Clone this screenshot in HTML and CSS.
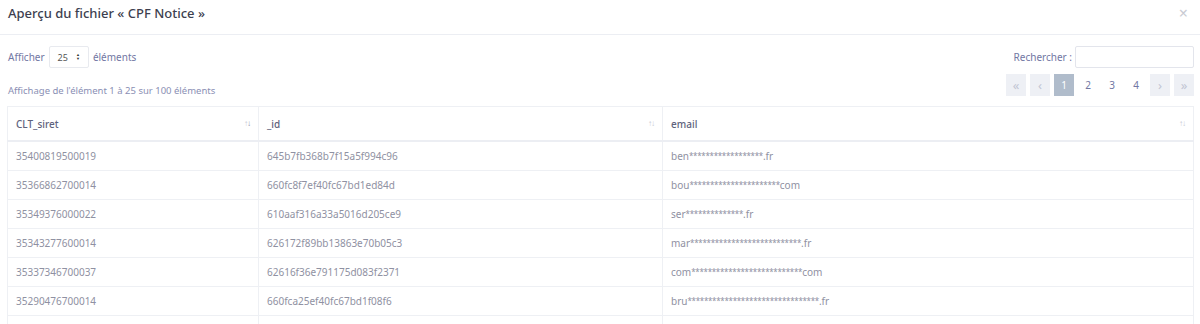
FILE: index.html
```html
<!DOCTYPE html>
<html lang="fr">
<head>
    <meta charset="UTF-8">
    <title>Aperçu du fichier</title>
    <link rel="stylesheet" href="styles.css">
</head>
<body>
<div class="modal">
    <div class="modal-header">
        <h5 class="modal-title">Aperçu du fichier « CPF Notice »</h5>
        <span class="close">&times;</span>
    </div>
    <div class="modal-body">
        <div class="controls">
            <div class="left">
                <label class="length">Afficher
                    <span class="select">25 <span class="caret">&#9650;<br>&#9660;</span></span>
                    éléments</label>
                <div class="info">Affichage de l'élément 1 à 25 sur 100 éléments</div>
            </div>
            <div class="right">
                <label class="search">Rechercher : <span class="input"></span></label>
                <div class="pagination">
                    <span class="page nav">&laquo;</span>
                    <span class="page nav">&lsaquo;</span>
                    <span class="page active">1</span>
                    <span class="page">2</span>
                    <span class="page">3</span>
                    <span class="page">4</span>
                    <span class="page nav">&rsaquo;</span>
                    <span class="page nav">&raquo;</span>
                </div>
            </div>
        </div>

        <table class="data">
            <thead>
                <tr>
                    <th class="c1">CLT_siret <span class="sort">&uarr;<b>&darr;</b></span></th>
                    <th class="c2">_id <span class="sort">&uarr;&darr;</span></th>
                    <th>email <span class="sort">&uarr;&darr;</span></th>
                </tr>
            </thead>
            <tbody>
                <tr><td>35400819500019</td><td>645b7fb368b7f15a5f994c96</td><td>ben<span class="mask">******************</span>.fr</td></tr>
                <tr><td>35366862700014</td><td>660fc8f7ef40fc67bd1ed84d</td><td>bou<span class="mask">**********************</span>com</td></tr>
                <tr><td>35349376000022</td><td>610aaf316a33a5016d205ce9</td><td>ser<span class="mask">**************</span>.fr</td></tr>
                <tr><td>35343277600014</td><td>626172f89bb13863e70b05c3</td><td>mar<span class="mask">***************************</span>.fr</td></tr>
                <tr><td>35337346700037</td><td>62616f36e791175d083f2371</td><td>com<span class="mask">***************************</span>com</td></tr>
                <tr><td>35290476700014</td><td>660fca25ef40fc67bd1f08f6</td><td>bru<span class="mask">********************************</span>.fr</td></tr>
                <tr><td></td><td></td><td></td></tr>
            </tbody>
        </table>
    </div>
</div>
</body>
</html>
```

FILE: styles.css
```css
body {
    margin: 0;
    background: #fff;
    font-family: 'Noto Sans', sans-serif;
    font-size: 10px;
    color: #8f91a2;
    overflow: hidden;
}

.modal-header {
    display: flex;
    justify-content: space-between;
    align-items: flex-start;
    height: 35px;
    padding: 4px 8px 0 8px;
    border-bottom: 1px solid #eceef3;
    box-sizing: border-box;
}

.modal-title {
    margin: 0;
    font-size: 13px;
    font-weight: 500;
    color: #3d3f4f;
}

.close {
    font-size: 16px;
    line-height: 18px;
    color: #c9cbd3;
    margin-right: 4px;
}

.modal-body {
    padding: 11px 6px 0 7px;
}

.controls {
    display: flex;
    justify-content: space-between;
}

.length {
    display: flex;
    align-items: center;
    gap: 4px;
    color: #7277a3;
    height: 22px;
    padding-left: 1px;
}

.select {
    display: inline-flex;
    align-items: center;
    gap: 8px;
    border: 1px solid #e8eaef;
    border-radius: 2px;
    height: 20px;
    padding: 0 8px;
    font-size: 9px;
    color: #555;
}

.caret {
    font-size: 4px;
    line-height: 4px;
    color: #333;
}

.info {
    margin-top: 16px;
    padding-left: 1px;
    color: #8a8fb4;
    font-size: 9.5px;
}

.right {
    display: flex;
    flex-direction: column;
    align-items: flex-end;
}

.search {
    display: flex;
    align-items: center;
    gap: 3px;
    color: #7277a3;
}

.input {
    display: inline-block;
    width: 117px;
    height: 20px;
    border: 1px solid #e3e5ec;
    border-radius: 2px;
}

.pagination {
    display: flex;
    gap: 4px;
    margin-top: 6px;
}

.page {
    display: flex;
    align-items: center;
    justify-content: center;
    width: 20px;
    height: 22px;
    color: #7277a3;
    font-size: 10px;
}

.page.nav {
    background: #eef0f5;
    color: #c1c5d3;
    font-size: 13px;
}

.page.active {
    background: #b0bccb;
    color: #fff;
}

.data {
    width: 100%;
    margin-top: 9px;
    border-collapse: collapse;
    border: 1px solid #eef0f4;
}

.data th {
    text-align: left;
    font-weight: 500;
    color: #5e627c;
    height: 33px;
    padding: 0 8px;
    border-bottom: 2px solid #eceef3;
    border-left: 1px solid #eef0f4;
}

.data th.c1 {
    width: 234px;
}

.data th.c2 {
    width: 387px;
}

.sort {
    float: right;
    font-size: 8px;
    color: #c5c8d4;
    letter-spacing: -1px;
}

.sort b {
    font-weight: normal;
    color: #8f93a8;
}

.data td {
    height: 28px;
    padding: 0 8px;
    border-bottom: 1px solid #eef0f4;
    border-left: 1px solid #eef0f4;
    color: #8f91a2;
}

.mask {
    font-size: 8px;
    vertical-align: 1px;
    letter-spacing: -0.3px;
}
```
